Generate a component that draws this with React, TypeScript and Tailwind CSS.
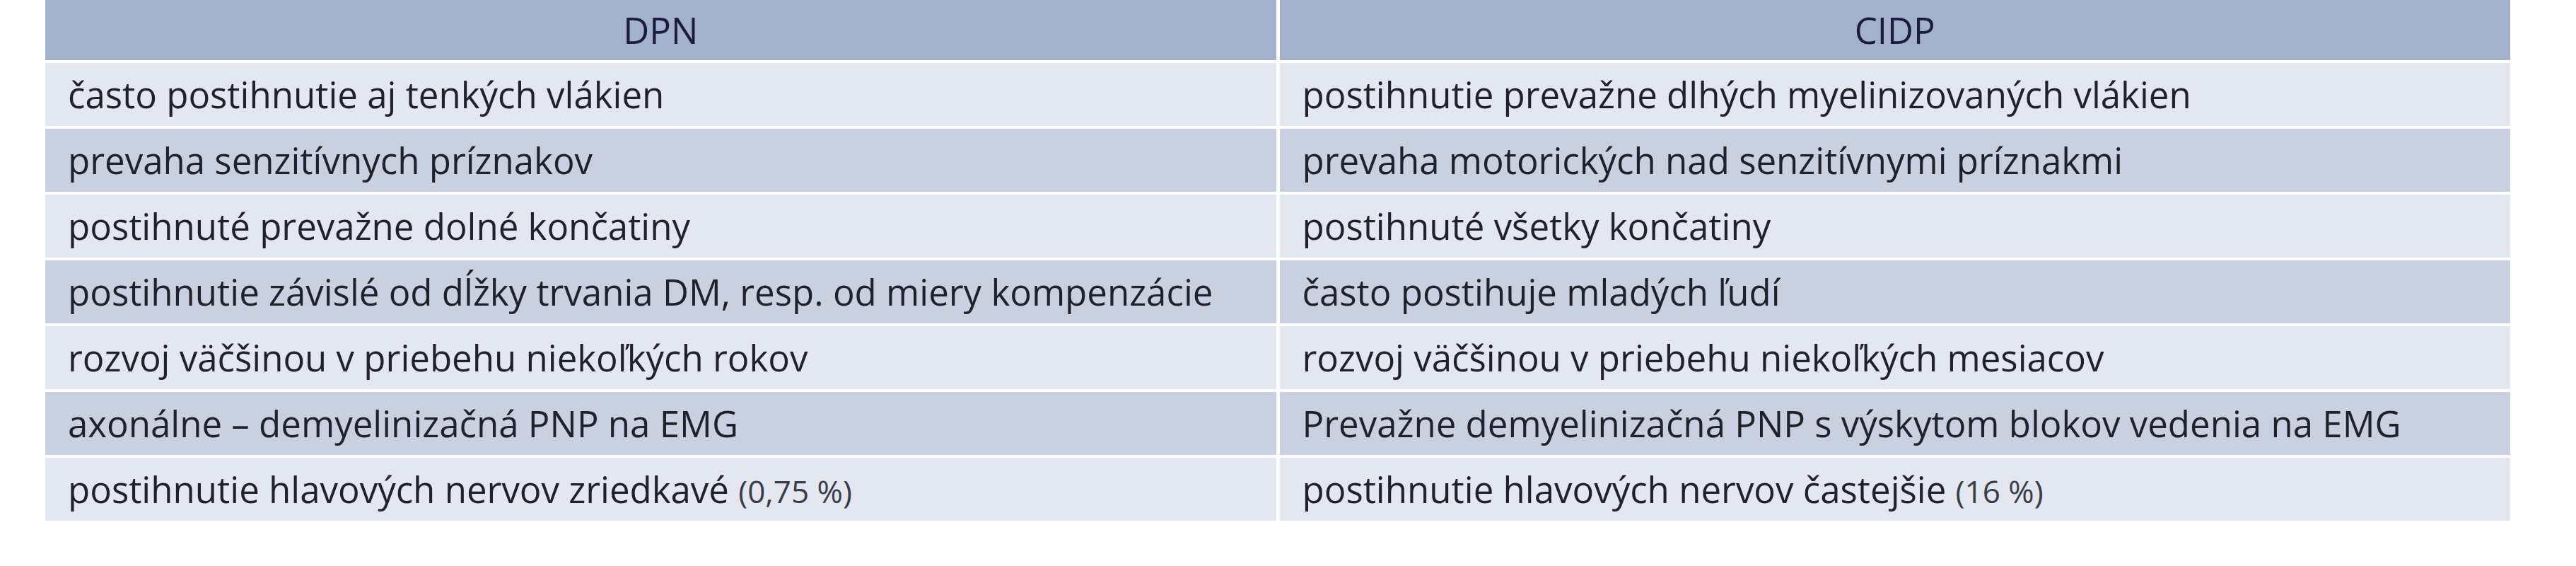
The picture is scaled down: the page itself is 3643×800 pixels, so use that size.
const rows: [React.ReactNode, React.ReactNode][] = [
  ["často postihnutie aj tenkých vlákien", "postihnutie prevažne dlhých myelinizovaných vlákien"],
  ["prevaha senzitívnych príznakov", "prevaha motorických nad senzitívnymi príznakmi"],
  ["postihnuté prevažne dolné končatiny", "postihnuté všetky končatiny"],
  [
    "postihnutie závislé od dĺžky trvania DM, resp. od miery kompenzácie",
    "často postihuje mladých ľudí",
  ],
  ["rozvoj väčšinou v priebehu niekoľkých rokov", "rozvoj väčšinou v priebehu niekoľkých mesiacov"],
  ["axonálne – demyelinizačná PNP na EMG", "Prevažne demyelinizačná PNP s výskytom blokov vedenia na EMG"],
  [
    <span>
      postihnutie hlavových nervov zriedkavé <span className="text-[44px] text-[#3a3d48]">(0,75 %)</span>
    </span>,
    <span>
      postihnutie hlavových nervov častejšie <span className="text-[44px] text-[#3a3d48]">(16 %)</span>
    </span>,
  ],
];

function Cell({ children, shade }: { children: React.ReactNode; shade: "light" | "dark" }) {
  return (
    <div
      className={`flex h-[89px] items-center whitespace-nowrap pl-8 text-[51px] text-[#1f212b] ${
        shade === "light" ? "bg-[#e3e7ef]" : "bg-[#c9d1e1]"
      }`}
    >
      {children}
    </div>
  );
}

export default function App() {
  return (
    <div className="min-h-[800px] bg-white pl-16 pr-[93px] font-['Open_Sans',sans-serif]">
      <div className="grid grid-cols-2 gap-x-[5px] gap-y-1 bg-white">
        <div className="flex h-[85px] items-center justify-center bg-[#a2b1cc] text-[51px] text-[#1a1d40]">DPN</div>
        <div className="flex h-[85px] items-center justify-center bg-[#a2b1cc] text-[51px] text-[#1a1d40]">CIDP</div>
        {rows.map(([left, right], i) => {
          const shade = i % 2 === 0 ? "light" : "dark";
          return [
            <Cell key={`l${i}`} shade={shade}>
              {left}
            </Cell>,
            <Cell key={`r${i}`} shade={shade}>
              {right}
            </Cell>,
          ];
        })}
      </div>
    </div>
  );
}
